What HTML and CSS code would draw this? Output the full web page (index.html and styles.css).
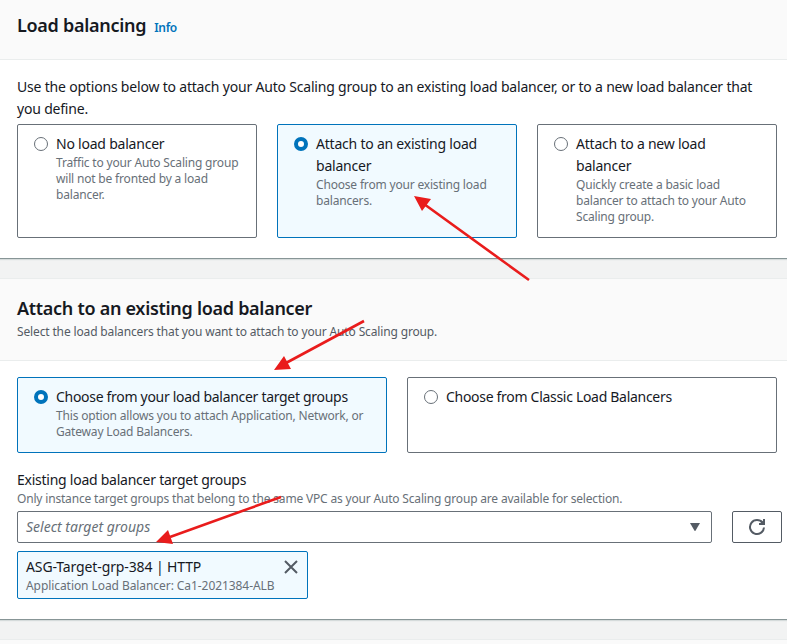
FILE: index.html
```html
<!DOCTYPE html>
<html lang="en">
<head>
<meta charset="utf-8">
<title>Load balancing</title>
<link rel="stylesheet" href="styles.css">
</head>
<body>
<main class="page">
  <section class="panel">
    <header class="panel-header first">
      <h2>Load balancing<a class="info">Info</a></h2>
    </header>
    <div class="panel-body first-body">
      <p class="intro">Use the options below to attach your Auto Scaling group to an existing load balancer, or to a new load balancer that<br>you define.</p>
      <div class="tiles three">
        <label class="tile">
          <span class="radio"></span>
          <span class="tile-text"><span class="name">No load balancer</span><span class="desc">Traffic to your Auto Scaling group<br>will not be fronted by a load<br>balancer.</span></span>
        </label>
        <label class="tile selected">
          <span class="radio"></span>
          <span class="tile-text"><span class="name">Attach to an existing load<br>balancer</span><span class="desc">Choose from your existing load<br>balancers.</span></span>
        </label>
        <label class="tile">
          <span class="radio"></span>
          <span class="tile-text"><span class="name">Attach to a new load<br>balancer</span><span class="desc">Quickly create a basic load<br>balancer to attach to your Auto<br>Scaling group.</span></span>
        </label>
      </div>
    </div>
  </section>

  <section class="panel">
    <header class="panel-header second">
      <h2>Attach to an existing load balancer</h2>
      <p class="subtitle">Select the load balancers that you want to attach to your Auto Scaling group.</p>
    </header>
    <div class="panel-body second-body">
      <div class="tiles two">
        <label class="tile selected">
          <span class="radio"></span>
          <span class="tile-text"><span class="name">Choose from your load balancer target groups</span><span class="desc">This option allows you to attach Application, Network, or<br>Gateway Load Balancers.</span></span>
        </label>
        <label class="tile">
          <span class="radio"></span>
          <span class="tile-text"><span class="name">Choose from Classic Load Balancers</span></span>
        </label>
      </div>
      <div class="field-label">Existing load balancer target groups</div>
      <div class="field-hint">Only instance target groups that belong to the same VPC as your Auto Scaling group are available for selection.</div>
      <div class="field-row">
        <div class="select"><span class="placeholder">Select target groups</span>
          <svg class="caret" width="10" height="8" viewBox="0 0 10 8"><path d="M0 0h10L5.6 7.6a.7.7 0 0 1-1.2 0z" fill="#545b64"/></svg>
        </div>
        <button class="refresh" aria-label="Refresh">
          <svg width="18" height="18" viewBox="0 0 18 18" fill="none" stroke="#545b64" stroke-width="2"><path d="M16 9.5A7 7 0 1 1 14.6 4.8"/><path d="M16 1V6h-5"/><path d="M13 3l3 3"/></svg>
        </button>
      </div>
      <div class="token">
        <div><div class="token-name">ASG-Target-grp-384 | HTTP</div><div class="token-desc">Application Load Balancer: Ca1-2021384-ALB</div></div>
        <svg class="close" width="14" height="14" viewBox="0 0 14 14" stroke="#545b64" stroke-width="2"><path d="M1 1l12 12M13 1L1 13"/></svg>
      </div>
    </div>
  </section>
  <section class="panel next"></section>

  <svg class="arrows" width="787" height="644" viewBox="0 0 787 644" fill="#e91c1c" stroke="#e91c1c">
    <path d="M529 280L424 204M364 321L286 363M281 497L170 537" fill="none" stroke-width="2.6"/>
    <path stroke="none" d="M414 196L431 199L422 211zM274 370L284 356L291 369zM156 542L168 530L173 544z"/>
  </svg>
</main>
</body>
</html>
```
FILE: styles.css
```css
* { box-sizing: border-box; }
body { margin: 0; background: #f2f3f3; color: #16191f; font: 14px/22px "Noto Sans", sans-serif; }
h2, p { margin: 0; }
.page { position: relative; height: 644px; overflow: hidden; display: flex; flex-direction: column; gap: 19px; white-space: nowrap; }
.panel { flex: none; background: #fff; border-bottom: 1px solid #879596; box-shadow: 0 1px 1px #d5dbdb; }
.panel + .panel { border-top: 1px solid #eaeded; }
.panel-header { background: #fafafa; border-bottom: 1px solid #eaeded; padding: 0 17px; }
.first { height: 60px; padding-top: 14px; }
.second { height: 82px; padding-top: 18px; }
h2 { font-size: 18px; line-height: 22px; font-weight: 600; letter-spacing: -0.29px; }
.info { color: #0073bb; font-size: 12px; font-weight: 600; margin-left: 8px; }
.subtitle { color: #545b64; font-size: 12px; line-height: 22px; margin-top: 2px; letter-spacing: -0.145px; }
.first-body { height: 198px; padding: 16px 10px 0 17px; }
.intro { margin-bottom: 4px; letter-spacing: -0.193px; }
.tiles { display: grid; gap: 20px; }
.three { grid-template-columns: repeat(3, minmax(0, 1fr)); height: 114px; }
.two { grid-template-columns: repeat(2, minmax(0, 1fr)); height: 76px; }
.tile { display: flex; gap: 8px; border: 1px solid #687078; border-radius: 2px; padding: 8px 16px; }
.selected { border-color: #0073bb; background: #f1faff; }
.radio { flex: none; width: 14px; height: 14px; margin-top: 4px; border: 1px solid #687078; border-radius: 50%; background: #fff; }
.selected .radio { border: 4px solid #0073bb; }
.name, .desc { display: block; }
.name { letter-spacing: -0.22px; }
.two .name { letter-spacing: -0.3px; }
.desc { color: #687078; font-size: 12px; line-height: 16px; letter-spacing: -0.18px; }
.second-body { height: 258px; padding: 16px 10px 0 17px; }
.field-label { margin-top: 16px; letter-spacing: -0.25px; }
.field-hint { color: #687078; font-size: 12px; line-height: 16px; margin-bottom: 4px; letter-spacing: -0.18px; }
.field-row { display: flex; gap: 20px; height: 32px; margin-right: -5px; }
.select { flex: 1; display: flex; align-items: center; justify-content: space-between; border: 1px solid #687078; border-radius: 2px; padding: 0 11px 0 8px; }
.placeholder { color: #687078; font-style: italic; }
.refresh { width: 50px; padding: 0; display: flex; align-items: center; justify-content: center; background: #fff; border: 1px solid #545b64; border-radius: 2px; }
.token { display: flex; justify-content: space-between; width: 291px; height: 48px; margin-top: 8px; padding: 4px 9px 0 8px; background: #f1faff; border: 1px solid #0073bb; border-radius: 2px; }
.token-name { letter-spacing: -0.12px; }
.token-desc { color: #687078; font-size: 12px; line-height: 16px; letter-spacing: -0.07px; }
.close { margin-top: 4px; }
.next { height: 30px; background: #fafafa; }
.arrows { position: absolute; left: 0; top: 0; pointer-events: none; }
```
